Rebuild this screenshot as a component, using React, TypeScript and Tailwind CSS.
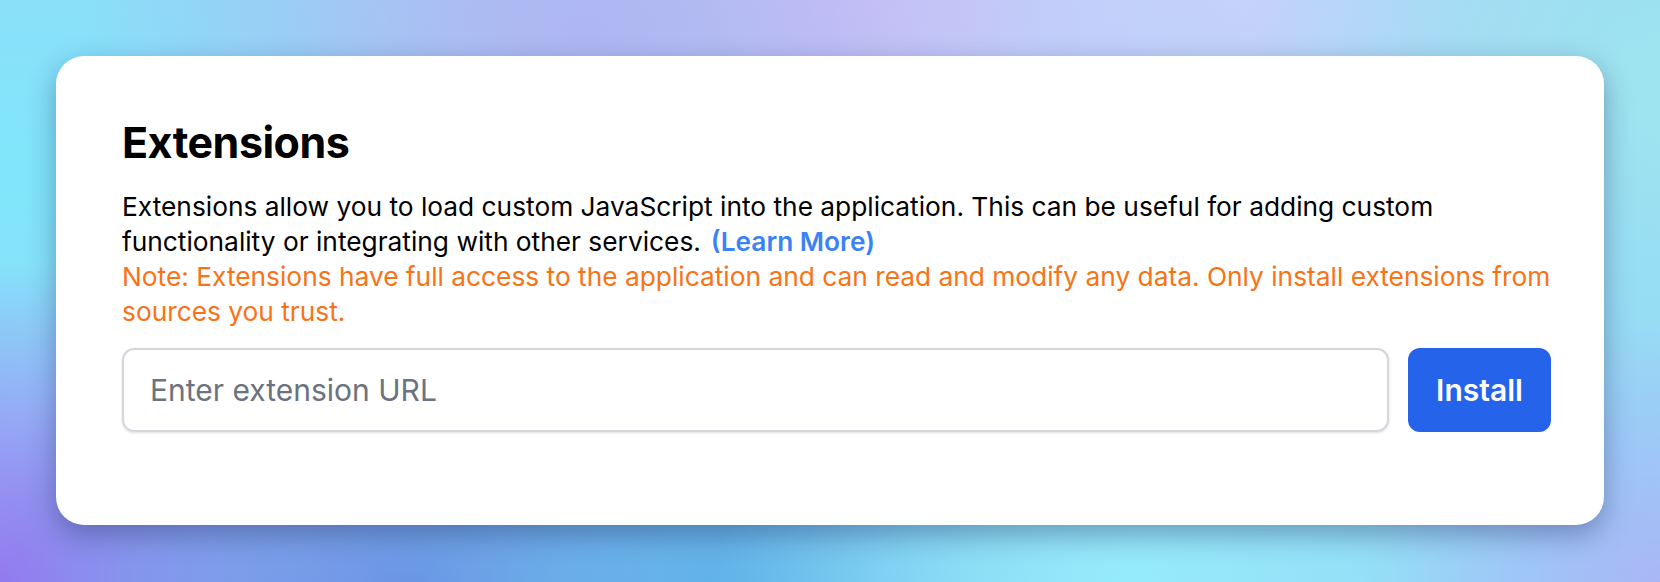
import React from "react";

export default function App() {
  return (
    <div
      className="relative w-full h-[582px] overflow-hidden p-14"
      style={{ fontFamily: "Inter, 'Noto Sans', sans-serif" }}
    >
      <div className="absolute inset-0 bg-[#93d8f6]" />
      <div className="absolute inset-0 bg-[radial-gradient(ellipse_45%_60%_at_0%_30%,#80e6fb_0%,rgba(128,230,251,0)_100%)]" />
      <div className="absolute inset-0 bg-[radial-gradient(ellipse_35%_60%_at_52%_0%,#d3c0f8_0%,rgba(211,192,248,0)_100%)]" />
      <div className="absolute inset-0 bg-[radial-gradient(ellipse_30%_55%_at_35%_5%,#aeb6f1_0%,rgba(174,182,241,0)_100%)]" />
      <div className="absolute inset-0 bg-[radial-gradient(ellipse_25%_50%_at_75%_0%,#c6d2fa_0%,rgba(198,210,250,0)_100%)]" />
      <div className="absolute inset-0 bg-[radial-gradient(ellipse_25%_60%_at_100%_15%,#9ee4ef_0%,rgba(158,228,239,0)_100%)]" />
      <div className="absolute inset-0 bg-[radial-gradient(ellipse_22%_55%_at_0%_100%,#9c74f2_0%,rgba(156,116,242,0)_100%)]" />
      <div className="absolute inset-0 bg-[radial-gradient(ellipse_30%_45%_at_25%_100%,#6d8fe4_0%,rgba(109,143,228,0)_100%)]" />
      <div className="absolute inset-0 bg-[radial-gradient(ellipse_25%_50%_at_45%_100%,#5fb2e8_0%,rgba(95,178,232,0)_100%)]" />
      <div className="absolute inset-0 bg-[radial-gradient(ellipse_25%_50%_at_68%_100%,#96ebfa_0%,rgba(150,235,250,0)_100%)]" />
      <div className="absolute inset-0 bg-[radial-gradient(ellipse_18%_45%_at_100%_100%,#a9b6f6_0%,rgba(169,182,246,0)_100%)]" />

      <div className="relative bg-white rounded-[28px] pl-[66px] pr-[53px] pt-16 pb-[93px] shadow-[0_10px_28px_rgba(30,40,90,0.38)]">
        <h1 className="text-[43px] leading-[44px] font-bold text-black tracking-[-0.5px]">
          Extensions
        </h1>
        <div className="mt-[25px] text-[26.3px] leading-[35px] text-black">
          <p>
            <span className="block whitespace-nowrap">
              Extensions allow you to load custom JavaScript into the application. This can be useful for adding custom
            </span>
            <span className="block whitespace-nowrap">
              functionality or integrating with other services.
              <a className="ml-2.5 font-semibold text-[#3b82f6]">(Learn More)</a>
            </span>
          </p>
          <p className="text-[#f97316]">
            <span className="block whitespace-nowrap">
              Note: Extensions have full access to the application and can read and modify any data. Only install extensions from
            </span>
            <span className="block whitespace-nowrap">sources you trust.</span>
          </p>
        </div>
        <div className="mt-[19px] flex gap-[19px]">
          <input
            className="flex-1 h-[84px] rounded-xl border-2 border-[#d4d6dc] px-[26px] text-[30px] text-gray-900 placeholder:text-[#6b7280] shadow-sm outline-none"
            placeholder="Enter extension URL"
          />
          <button className="h-[84px] w-[143px] rounded-xl bg-[#2563eb] text-white text-[30px] font-semibold">
            Install
          </button>
        </div>
      </div>
    </div>
  );
}
